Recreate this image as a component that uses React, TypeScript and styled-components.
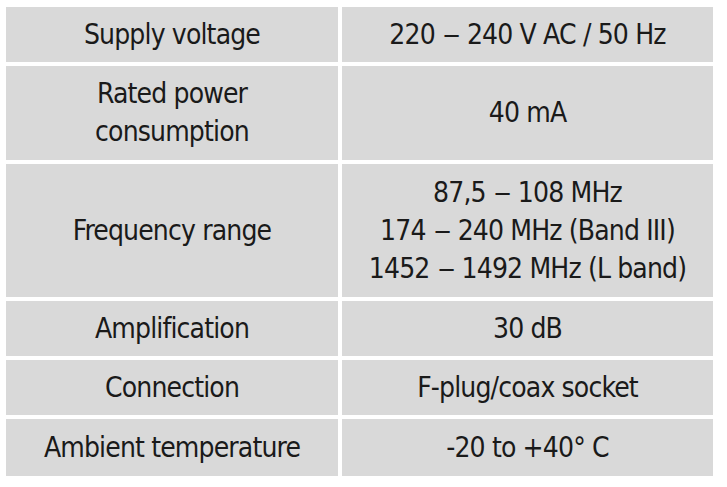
import { Fragment } from "react";
import styled, { createGlobalStyle } from "styled-components";

const GlobalStyle = createGlobalStyle`
  body {
    margin: 0;
    background: #ffffff;
  }
`;

const Page = styled.div`
  padding: 7px 0 0 6px;
`;

const Table = styled.div`
  display: grid;
  grid-template-columns: 332px 371px;
  column-gap: 4px;
  row-gap: 4px;
  font-family: "DejaVu Sans Condensed", "DejaVu Sans", sans-serif;
  font-stretch: condensed;
  font-size: 28px;
  letter-spacing: -0.85px;
  line-height: 38px;
  color: #1a1a1a;
`;

const Cell = styled.div<{ $h: number }>`
  background-color: #d9d9d9;
  height: ${(props) => props.$h}px;
  display: flex;
  flex-direction: column;
  justify-content: center;
  align-items: center;
  text-align: center;
`;

const Dash = styled.span`
  display: inline-block;
  margin: 0 3px;
  transform: scaleX(1.4);
`;

const rows = [
  { h: 55, label: ["Supply voltage"], value: ["220 – 240 V AC / 50 Hz"] },
  { h: 94, label: ["Rated power", "consumption"], value: ["40 mA"] },
  {
    h: 133,
    label: ["Frequency range"],
    value: ["87,5 – 108 MHz", "174 – 240 MHz (Band III)", "1452 – 1492 MHz (L band)"],
  },
  { h: 55, label: ["Amplification"], value: ["30 dB"] },
  { h: 55, label: ["Connection"], value: ["F-plug/coax socket"] },
  { h: 57, label: ["Ambient temperature"], value: ["-20 to +40° C"] },
];

function Line({ text }: { text: string }) {
  const parts = text.split("–");
  return (
    <span>
      {parts.map((part, i) => (
        <Fragment key={i}>
          {i > 0 && <Dash>–</Dash>}
          {part}
        </Fragment>
      ))}
    </span>
  );
}

function App() {
  return (
    <Page>
      <GlobalStyle />
      <Table>
        {rows.map((row) => (
          <Fragment key={row.label[0]}>
            <Cell $h={row.h}>
              {row.label.map((line) => (
                <Line key={line} text={line} />
              ))}
            </Cell>
            <Cell $h={row.h}>
              {row.value.map((line) => (
                <Line key={line} text={line} />
              ))}
            </Cell>
          </Fragment>
        ))}
      </Table>
    </Page>
  );
}

export default App;
